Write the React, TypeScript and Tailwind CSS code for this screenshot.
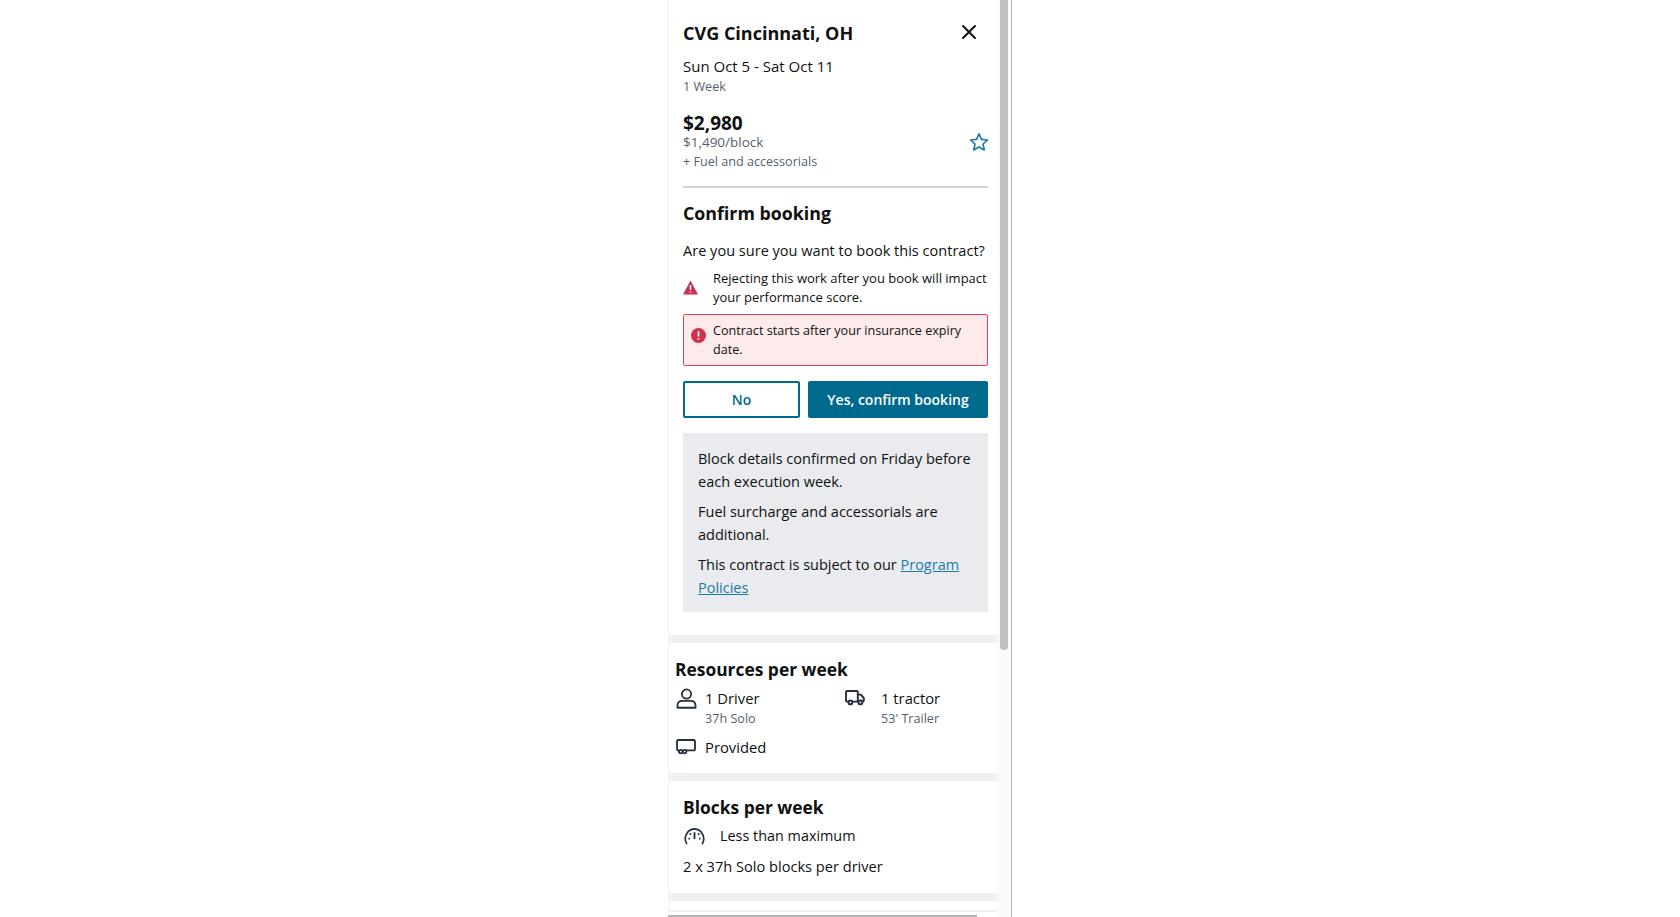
const Band = () => <div className="h-[8px] bg-[#f0f1f3]" />;

const Person = () => (
  <svg width="21" height="21" viewBox="0 0 20 20" fill="none" stroke="#232f3e" strokeWidth="1.7" strokeLinejoin="round">
    <circle cx="10" cy="5.8" r="4.4" />
    <path d="M1.400 18.800v-2c0-2.800 2-4.500 4.600-4.500h8c2.600 0 4.600 1.700 4.600 4.500v2z" />
  </svg>
);

const Truck = () => (
  <svg width="20" height="16" viewBox="0 0 20 16" fill="none" stroke="#232f3e" strokeWidth="1.9" strokeLinejoin="round">
    <path d="M3.400 11.600H2.200A1.200 1.200 0 0 1 1 10.400V2.200A1.200 1.200 0 0 1 2.200 1h9.600a1 1 0 0 1 1 1v9.600H7.400" />
    <path d="M12.800 4.600h3l3 3.400v2.600a1 1 0 0 1-1 1h-.8M12.800 11.600h.6" />
    <circle cx="5.400" cy="12.400" r="1.900" />
    <circle cx="15.400" cy="12.400" r="1.900" />
  </svg>
);

const Trailer = () => (
  <svg width="20" height="16" viewBox="0 0 20 16" fill="none" stroke="#232f3e" strokeWidth="1.800" strokeLinejoin="round">
    <path d="M3 11.400H2.200A1.200 1.200 0 0 1 1 10.200V2.200A1.200 1.200 0 0 1 2.200 1h15.600A1.200 1.200 0 0 1 19 2.200v8a1.200 1.200 0 0 1-1.200 1.200H10" />
    <circle cx="4.800" cy="12.600" r="1.800" />
    <circle cx="8.600" cy="12.600" r="1.800" />
  </svg>
);

const Gauge = () => (
  <svg width="23" height="17" viewBox="0 0 24 18" fill="none" stroke="#232f3e" strokeWidth="1.800" strokeLinecap="round">
    <path d="M3.600 16.600A10.500 10.500 0 0 1 12 1a10.500 10.500 0 0 1 8.400 15.600" />
    <path d="M12 5.200v5.600M7.600 6.400v.1M16.400 6.400v.1M6.400 11.200v.1M17.600 11.200v.1" strokeWidth="2" />
  </svg>
);

const App = () => {
  return (
    <div className="h-[917px] overflow-hidden bg-white font-['Open_Sans',sans-serif] text-[#0f1111]">
      <div className="mx-auto flex h-[917px] w-[344px] border-r border-[#b5b5b5]">
        <div className="w-[329px] shrink-0 border-l border-[#f2f2f2]">
          {/* Header */}
          <div className="pl-[14px] pr-[9px]">
            <div className="flex h-[51px] items-end justify-between pb-[5px]">
              <h1 className="text-[18px] font-bold leading-[26px]">CVG Cincinnati, OH</h1>
              <svg className="mb-[6px] mr-[11px]" width="16" height="16" viewBox="0 0 16 16" stroke="#0f1111" strokeWidth="2" strokeLinecap="round">
                <path d="M2 2l12 12M14 2L2 14" />
              </svg>
            </div>
            <p className="mt-[5px] text-[15px] leading-[20px]">Sun Oct 5 - Sat Oct 11</p>
            <p className="mt-[1px] text-[12.600px] leading-[20px] text-[#565f6b]">1 Week</p>

            <div className="relative mt-[15px] border-b-2 border-[#ccd5df] pb-[14px]">
              <p className="text-[19px] font-bold leading-[22px]">$2,980</p>
              <p className="text-[13.500px] leading-[16px] text-[#565f6b]">$1,490/block</p>
              <p className="mt-[2px] text-[12.600px] leading-[20px] text-[#565f6b]">+ Fuel and accessorials</p>
              <svg className="absolute right-[-1px] top-[20px]" width="20" height="20" viewBox="0 0 24 24" fill="none" stroke="#1b7ba8" strokeWidth="2" strokeLinejoin="round">
                <path d="M12 2.200l3 6.600 7.200.8-5.400 4.800 1.500 7.100-6.300-3.600-6.300 3.600 1.500-7.100L1.800 9.600 9 8.800z" />
              </svg>
            </div>

            {/* Confirm */}
            <h2 className="mt-[12px] text-[17.800px] font-bold leading-[26px]">Confirm booking</h2>
            <p className="mt-[14px] whitespace-nowrap text-[14.550px] leading-[20px]">Are you sure you want to book this contract?</p>
            <div className="mt-[9px] flex items-center">
              <svg className="mb-[2px] shrink-0" width="30" height="15" viewBox="0 0 30 15">
                <path d="M7.500 0.500L15 14.500H0z" fill="#c9304a" />
                <path d="M7.500 5v5M7.500 11.400v1.400" stroke="white" strokeWidth="1.500" />
              </svg>
              <p className="text-[13px] leading-[19px]">Rejecting this work after you book will impact your performance score.</p>
            </div>
            <div className="mt-[7px] flex h-[52px] items-center rounded-[2px] border border-[#d9455f] bg-[#fdeaea] pl-[7px] pr-[8px]">
              <svg className="mb-[9px] mr-[7px] shrink-0" width="15" height="15" viewBox="0 0 16 16">
                <circle cx="8" cy="8" r="8" fill="#d0304c" />
                <path d="M8 3.500v5.500M8 11v1.500" stroke="white" strokeWidth="1.800" />
              </svg>
              <p className="text-[12.600px] leading-[19px]">Contract starts after your insurance expiry date.</p>
            </div>

            {/* Buttons */}
            <div className="mt-[15px] flex gap-[8px]">
              <button className="h-[37px] w-[117px] rounded-[2px] border-2 border-[#006a8e] bg-white text-[14px] font-semibold text-[#006a8e]">No</button>
              <button className="h-[37px] flex-1 rounded-[2px] bg-[#006a8e] text-[14px] font-semibold text-white">Yes, confirm booking</button>
            </div>

            {/* Info box */}
            <div className="mt-[15px] flex h-[179px] flex-col gap-[8px] bg-[#e9ebee] px-[15px] pt-[15px] text-[14.500px] leading-[22.500px]">
              <p>Block details confirmed on Friday before each execution week.</p>
              <p>Fuel surcharge and accessorials are additional.</p>
              <p>
                This contract is subject to our{" "}
                <a href="#" className="text-[#1b7ba8] underline">Program</a>{" "}
                <a href="#" className="text-[#1b7ba8] underline">Policies</a>
              </p>
            </div>
          </div>
          <div className="mt-[23px]"><Band /></div>

          {/* Resources */}
          <div className="h-[130px] px-[6px] pt-[13px]">
            <h2 className="text-[17.400px] font-bold leading-[26px]">Resources per week</h2>
            <div className="mt-[6px] flex">
              <div className="flex w-[169px]">
                <div className="ml-[1px] w-[29px]"><Person /></div>
                <div>
                  <p className="text-[14.800px] leading-[20px]">1 Driver</p>
                  <p className="mt-[1px] text-[12.600px] leading-[20px] text-[#565f6b]">37h Solo</p>
                </div>
              </div>
              <div className="flex">
                <div className="ml-[1px] mt-[2px] w-[36px]"><Truck /></div>
                <div>
                  <p className="text-[14.800px] leading-[20px]">1 tractor</p>
                  <p className="mt-[1px] text-[12.600px] leading-[20px] text-[#565f6b]">53' Trailer</p>
                </div>
              </div>
            </div>
            <div className="mt-[8px] flex items-center">
              <div className="ml-[1px] w-[29px]"><Trailer /></div>
              <p className="text-[14.800px] leading-[20px]">Provided</p>
            </div>
          </div>
          <Band />

          {/* Blocks */}
          <div className="h-[112px] px-[14px] pt-[13px]">
            <h2 className="text-[17.400px] font-bold leading-[26px]">Blocks per week</h2>
            <div className="mt-[6px] flex items-center">
              <div className="w-[37px]"><Gauge /></div>
              <p className="text-[14.400px] leading-[20px]">Less than maximum</p>
            </div>
            <p className="mt-[10px] text-[14.600px] leading-[20px]">2 x 37h Solo blocks per driver</p>
          </div>
          <Band />
          <div className="mt-[9px] h-[2px] bg-[#f0f0f0]" />
          <div className="ml-[-1px] mt-[3px] h-[2px] w-[309px] bg-[#b5b5b5]" />
        </div>

        {/* Scrollbar */}
        <div className="flex flex-1 justify-center bg-[#fafafa]">
          <div className="h-[650px] w-[8px] rounded-b-[4px] bg-[#c1c1c1]" />
        </div>
      </div>
    </div>
  );
};

export default App;
